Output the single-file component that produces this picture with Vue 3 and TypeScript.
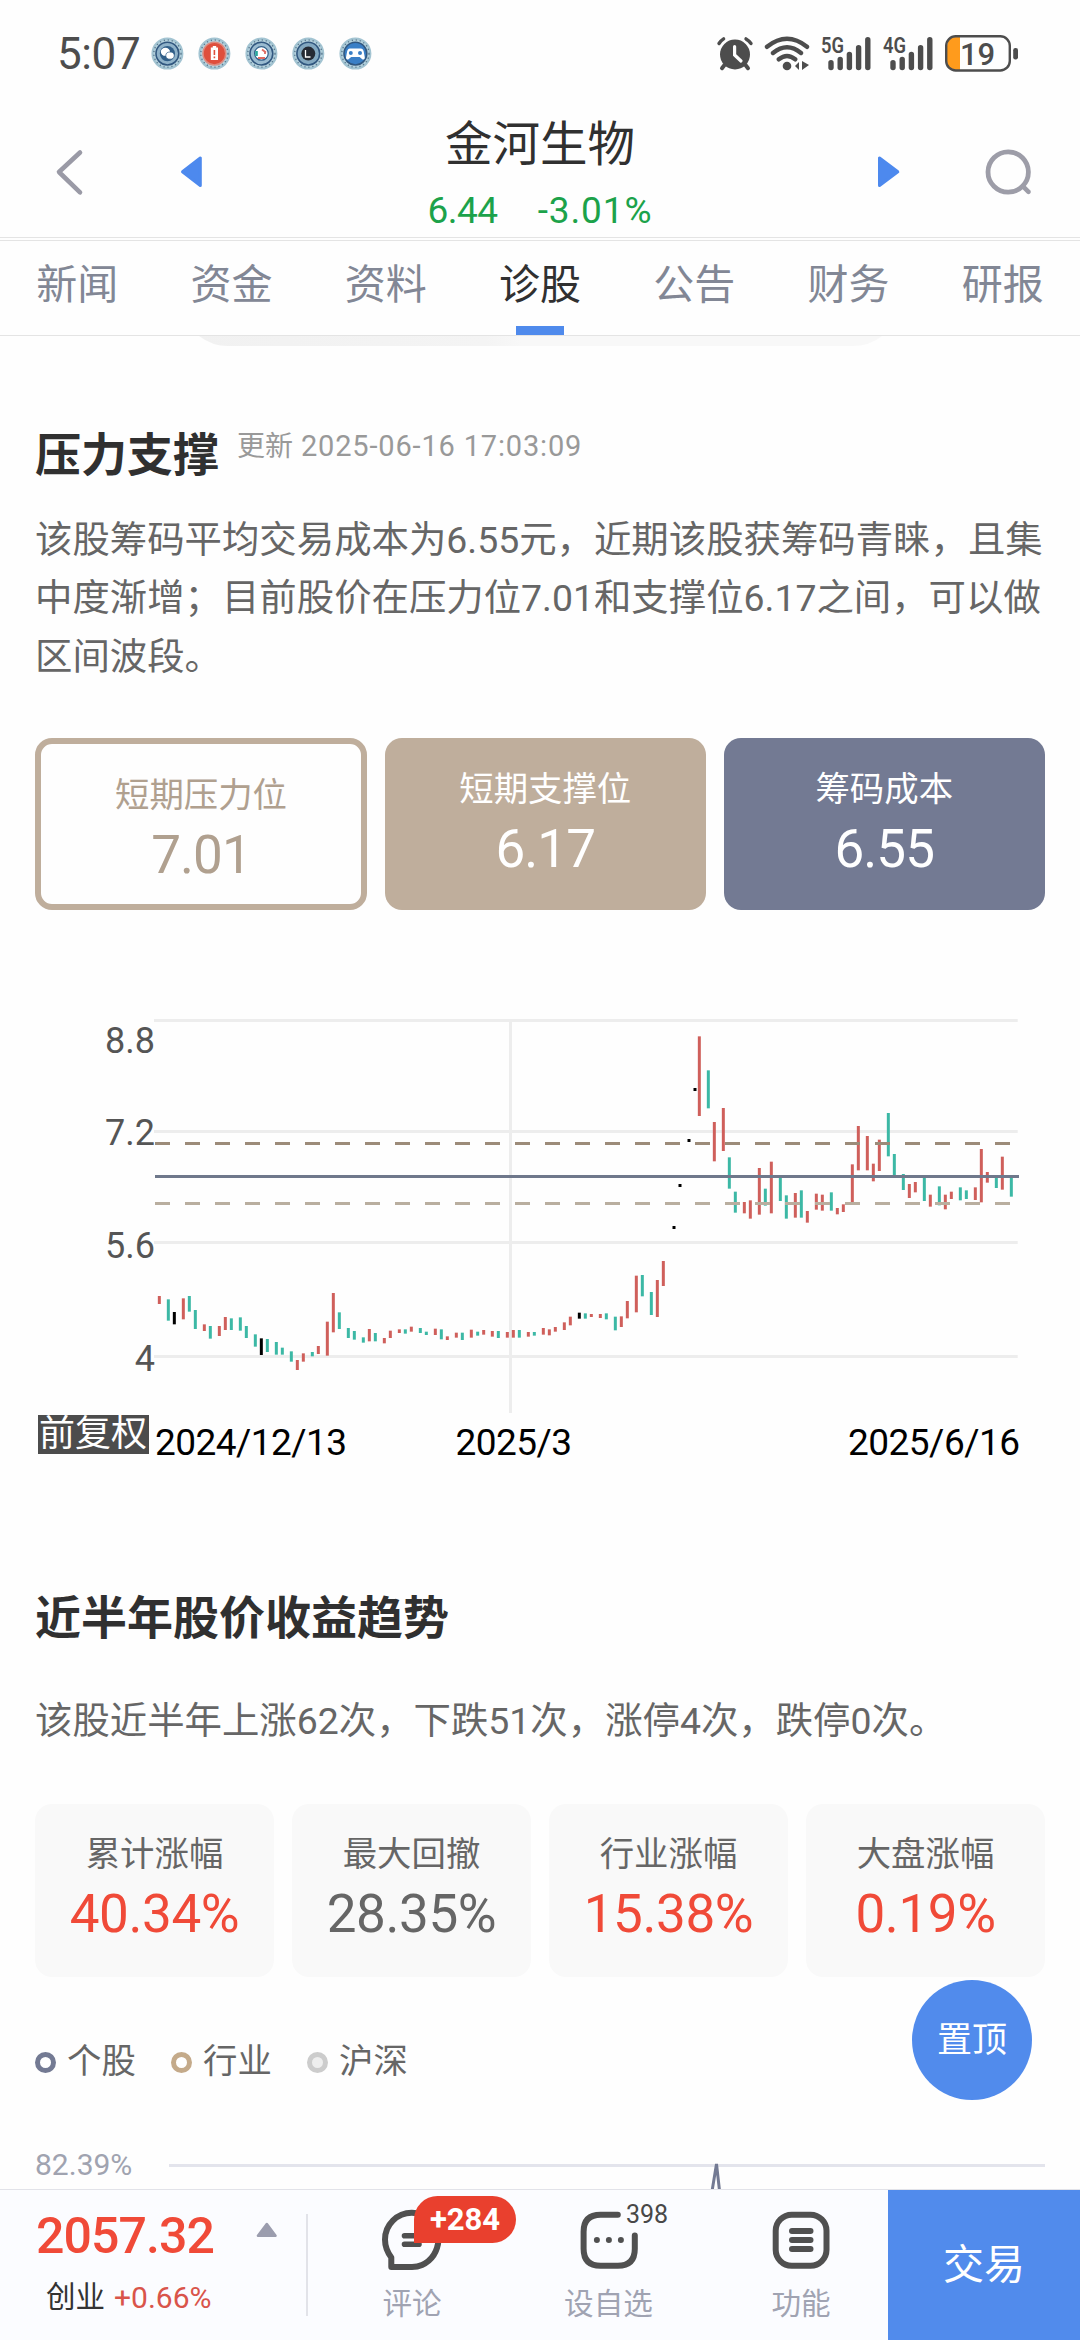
<script setup lang="ts">
type Kind = 'r' | 'g' | 'k'
type Candle = [x: number, top: number, bottom: number, kind: Kind]

const tabs = ['新闻', '资金', '资料', '诊股', '公告', '财务', '研报']
const activeTab = '诊股'

const levels = [
  { label: '短期压力位', value: '7.01', tone: 'outline' },
  { label: '短期支撑位', value: '6.17', tone: 'sand' },
  { label: '筹码成本', value: '6.55', tone: 'slate' },
]

const stats = [
  { label: '累计涨幅', value: '40.34%', up: true },
  { label: '最大回撤', value: '28.35%', up: false },
  { label: '行业涨幅', value: '15.38%', up: true },
  { label: '大盘涨幅', value: '0.19%', up: true },
]

const legend = [
  { name: '个股', ring: '#737a93', fill: '#ffffff' },
  { name: '行业', ring: '#c4aa8a', fill: '#ffffff' },
  { name: '沪深', ring: '#cccccc', fill: '#eeeeee' },
]

const gridY = [1020.5, 1131.5, 1242.5, 1356.5]
const axisY = [
  { text: '8.8', y: 1052.5 },
  { text: '7.2', y: 1144.8 },
  { text: '5.6', y: 1257.8 },
  { text: '4', y: 1370.6 },
]

const colors: Record<Kind, string> = { r: '#cf5f5b', g: '#3cb8a5', k: '#000000' }

// High-low ranges are stored in thirds of a pixel, relative to each segment's origin.
function segment(ox: number, oy: number, raw: string): Candle[] {
  return raw.split(';').map((item) => {
    const [x, t, b, k] = item.trim().split(' ')
    return [ox + Number(x) / 3, oy + Number(t) / 3, oy + Number(b) / 3, k as Kind]
  })
}

const candles: Candle[] = [
  ...segment(140, 1260, '58 108 132 r;85 118 182 g;103 156 193 k;130 115 178 r;148 108 155 g;166 150 207 g;193 193 213 r;211 198 236 g;238 198 228 r;256 171 210 r;274 175 210 g;301 172 212 g;319 198 234 g;346 223 260 g;364 235 285 k;382 237 276 g;409 246 284 g;427 263 284 g;454 274 305 g;472 300 330 r;490 280 305 r;517 276 289 g;535 258 282 r;562 185 287 r;580 99 217 r;598 157 207 g;625 204 234 g;643 213 239 g;670 232 248 g;688 207 244 r;706 219 244 g;733 234 250 r;751 212 234 r;778 208 219 r;796 208 221 g;814 200 215 r;841 204 219 g;859 215 225 g;886 206 225 r;904 208 238 g;922 229 240 r;949 218 233 r;967 218 240 g;994 209 233 r;1013 215 227 g;1031 210 224 r;1057 213 230 r;1075 213 234 g;1102 216 233 r;1120 210 233 r;1138 210 233 g;1165 216 230 r;1183 216 227 g'),
  ...segment(540, 1000, '10 984 1004 r;28 988 1006 r;46 981 995 r;73 967 990 r;91 950 976 r;118 938 956 k;136 940 956 g;154 942 951 r;181 942 954 r;199 940 958 g;226 950 991 g;244 949 981 r;262 903 955 r;289 827 937 r;307 825 889 g;334 876 945 g;352 840 951 r;370 783 858 r;402 678 687 k;420 552 561 k;447 417 426 k;465 264 273 k;478 109 348 r;505 211 325 g;523 366 484 r;550 324 453 r;568 472 566 g;586 575 638 g;613 606 640 r;631 601 656 r;658 504 644 r;676 566 617 g;694 485 640 r;721 533 603 g;739 586 656 g;766 579 653 r;784 571 653 g;802 633 668 r'),
  ...segment(800, 1000, '49 581 629 r;67 584 632 r;94 577 632 g;112 624 643 r;130 613 636 r;157 493 606 r;175 378 511 r;202 408 511 r;220 491 544 r;238 419 513 r;265 339 469 g;283 462 532 g;310 522 570 g;328 552 594 r;346 546 577 r;373 533 603 g;391 584 620 r;418 559 616 g;436 584 628 r;454 575 597 r;481 562 601 g;499 571 597 g;526 562 600 r;544 447 607 r;562 516 548 r;589 530 564 g;607 470 569 r;634 533 590 g'),
]

const signalTops = [60, 56.7, 51.7, 45, 37]
const signals = [
  { name: '5G', x: 821, bar: 831 },
  { name: '4G', x: 883, bar: 893 },
]
</script>

<template>
  <div class="screen">
    <header class="status">
      <span class="clock">5:07</span>
      <svg class="notices" width="230" height="40" viewBox="148 34 230 40">
        <g v-for="(cx, i) in [167.4, 214.4, 261.4, 308.3, 355.4]" :key="cx">
          <circle :cx="cx" cy="53.6" r="14.8" fill="#b7d3de" stroke="#a3c4d2" stroke-width="2.4" />
          <circle :cx="cx" cy="53.6" r="13.6" fill="none" stroke="#5b7a90" stroke-width="1.4" stroke-dasharray="1.2 2.8" />
          <circle :cx="cx" cy="53.6" r="11.4" :fill="['#8fb2c9', '#df4f3d', '#9abbd0', '#83a8c0', '#3a7fc6'][i]" :stroke="i === 1 ? '#dd8b80' : '#31577f'" stroke-width="1.6" />
        </g>
        <circle cx="167.4" cy="53.6" r="7.6" fill="#315f89" />
        <ellipse cx="165.4" cy="51.8" rx="4.6" ry="4" fill="#fff" />
        <ellipse cx="170" cy="55.6" rx="4.2" ry="3.6" fill="#fff" stroke="#315f89" stroke-width=".7" />
        <path d="M212.8 46h3.4v1.6h1.8v12.4h-7.2V47.6h2z" fill="#fff" />
        <path d="M214.4 50v5M214.4 56.6v1.6" stroke="#df4f3d" stroke-width="1.6" />
        <circle cx="261.4" cy="53.4" r="6.8" fill="#fff" stroke="#315f89" stroke-width="1.2" />
        <path d="M256.5 51v5" stroke="#28a79c" stroke-width="2.6" />
        <path d="M262 49.5l4 3M258 58h7M265 51v3" stroke="#df6a61" stroke-width="1.8" />
        <circle cx="308.3" cy="53.6" r="7" fill="#252a33" />
        <path d="M305.5 50v7h5" fill="none" stroke="#fff" stroke-width="1.3" />
        <path d="M350 48.600h10.800q2.200 0 2.900 3l1.100 6q0 2.600-2.200 1.800l-3-2.400h-8.400l-3 2.400q-2.200.8-2.200-1.800l1.100-6q.7-3 2.900-3z" fill="#fff" />
        <circle cx="350.8" cy="53" r="2" fill="#3a7fc6" />
        <circle cx="360" cy="53" r="2" fill="#3a7fc6" />
      </svg>
      <svg class="system" width="310" height="44" viewBox="714 32 310 44">
        <g fill="none" stroke="#4d4d4d" stroke-linecap="round">
          <circle cx="735" cy="54.5" r="15" fill="#4d4d4d" stroke="none" />
          <path d="M719 43.500q2-3 4.600-4.600M746 38.900q3 1.700 5 4.600" stroke-width="3.4" />
          <path d="M724.5 65l-2.500 3.200M745.5 65l2.500 3.200" stroke-width="4" />
          <path d="M734.6 46.500v8.500l6.400 6" stroke="#fff" stroke-width="3.2" />
          <path d="M767 46.8Q787 30.800 807 46.800M773 53Q787 41.500 801 53M778.800 59.300Q787 52.600 795.200 59.300" stroke-width="4.4" />
          <circle cx="787" cy="66" r="4.3" fill="#4d4d4d" stroke="none" />
          <path d="M795 66l4-4v8zM809 65l-7 5v-9z" fill="#4d4d4d" stroke="none" />
        </g>
        <g v-for="s in signals" :key="s.name">
          <text :x="s.x" y="53" textLength="23" lengthAdjust="spacingAndGlyphs" class="net">{{ s.name }}</text>
          <path v-for="(t, i) in signalTops" :key="t" :d="`M${s.bar + i * 9.2} ${t + 2.8}V67.5`" stroke="#4d4d4d" stroke-width="5.4" stroke-linecap="round" />
        </g>
        <path d="M960 37v33h-5q-8-1-8-9V46q0-8 8-9z" fill="#ff9b1c" />
        <rect x="946.2" y="36.3" width="63.6" height="34.2" rx="9.5" fill="none" stroke="#4d4d4d" stroke-width="2.4" />
        <rect x="1013.2" y="48" width="4.8" height="11.5" rx="2.2" fill="#4d4d4d" />
        <text x="960" y="65" class="level">19</text>
      </svg>
    </header>

    <div class="title-bar">
      <svg class="back" width="40" height="50" viewBox="50 147 40 50">
        <path d="M80 152.500L59 172l21 20.300" fill="none" stroke="#9a9aa6" stroke-width="4.6" stroke-linecap="round" stroke-linejoin="round" />
      </svg>
      <svg class="prev" width="24" height="34" viewBox="179 155 24 34">
        <path d="M182.500 171.800L200.300 158v27.600z" fill="#4d89ee" stroke="#4d89ee" stroke-width="3" stroke-linejoin="round" />
      </svg>
      <div class="stock">
        <h1>金河生物</h1>
        <p><span class="price">6.44</span><span class="change">-3.01%</span></p>
      </div>
      <svg class="next" width="24" height="34" viewBox="877 155 24 34">
        <path d="M897.800 171.800L879.500 158v27.600z" fill="#4d89ee" stroke="#4d89ee" stroke-width="3" stroke-linejoin="round" />
      </svg>
      <svg class="search" width="54" height="54" viewBox="980 145 54 54">
        <circle cx="1008.2" cy="172" r="20.2" fill="none" stroke="#9d9da8" stroke-width="4.8" />
        <path d="M1023.5 186.8l5 5" stroke="#9d9da8" stroke-width="4.6" stroke-linecap="round" />
      </svg>
    </div>

    <nav class="tabs">
      <a v-for="tab in tabs" :key="tab" :class="{ active: tab === activeTab }">{{ tab }}</a>
    </nav>

    <main class="content">
      <div class="pill"></div>

      <section class="pressure">
        <div class="heading">
          <h2>压力支撑</h2>
          <span class="updated">更新 <time>2025-06-16 17:03:09</time></span>
        </div>
        <p class="copy">该股筹码平均交易成本为6.55元，近期该股获筹码青睐，且集<br />中度渐增；目前股价在压力位7.01和支撑位6.17之间，可以做<br />区间波段。</p>
        <div class="levels">
          <div v-for="l in levels" :key="l.label" class="card" :class="l.tone">
            <span class="label">{{ l.label }}</span>
            <span class="value">{{ l.value }}</span>
          </div>
        </div>
      </section>

      <svg class="kline" width="1080" height="464" viewBox="0 1000 1080 464">
        <g stroke="#ededed" stroke-width="3">
          <path v-for="y in gridY" :key="y" :d="`M154 ${y}H1017.7`" />
          <path d="M510.5 1020V1413" />
        </g>
        <path v-for="c in candles" :key="c[0]" :d="`M${c[0]} ${c[1]}V${c[2]}`" :stroke="colors[c[3]]" stroke-width="3" />
        <path d="M155 1143.5H1018" stroke="#9c8b79" stroke-width="3" stroke-dasharray="15 15" />
        <path d="M155 1176.5H1019" stroke="#6f788b" stroke-width="3" />
        <path d="M155 1203.5H1018" stroke="#b9ae9f" stroke-width="3" stroke-dasharray="15 15" />
        <text v-for="a in axisY" :key="a.text" x="155" :y="a.y" text-anchor="end" class="axis">{{ a.text }}</text>
        <rect x="38" y="1415" width="111" height="39" fill="#4c4c4c" />
        <text x="39" y="1446" class="adjust">前复权</text>
        <text x="155" y="1454.5" class="date" textLength="192">2024/12/13</text>
        <text x="455.5" y="1454.5" class="date" textLength="116.5">2025/3</text>
        <text x="848" y="1454.5" class="date" textLength="172">2025/6/16</text>
      </svg>

      <section class="trend">
        <h2>近半年股价收益趋势</h2>
        <p class="copy">该股近半年上涨62次，下跌51次，涨停4次，跌停0次。</p>
        <div class="stats">
          <div v-for="s in stats" :key="s.label" class="card plain">
            <span class="label">{{ s.label }}</span>
            <span class="value" :class="{ up: s.up }">{{ s.value }}</span>
          </div>
        </div>
        <ul class="legend">
          <li v-for="g in legend" :key="g.name">
            <i :style="{ borderColor: g.ring, background: g.fill }"></i>{{ g.name }}
          </li>
        </ul>
        <div class="scale">
          <span>82.39%</span>
          <svg width="876" height="40" viewBox="170 2150 876 40">
            <path d="M170 2165.5H1046" stroke="#e3e4ec" stroke-width="3" />
            <path d="M712.4 2195L717.500 2164L721 2195" fill="none" stroke="#737a93" stroke-width="3" stroke-linejoin="bevel" />
          </svg>
        </div>
      </section>
    </main>

    <footer class="bottom">
      <div class="index">
        <div class="figures">
          <strong>2057.32</strong>
          <p>创业 <em>+0.66%</em></p>
        </div>
        <svg width="22" height="16" viewBox="256 2221.5 22 16">
          <path d="M266.800 2223.500L275.500 2235.300H258z" fill="#9b9dae" stroke="#9b9dae" stroke-width="2.6" stroke-linejoin="round" />
        </svg>
      </div>
      <div class="action">
        <svg width="64" height="64" viewBox="380 2208 64 64" fill="none" stroke="#505050" stroke-width="6" stroke-linecap="round" stroke-linejoin="round">
          <path d="M391.300 2267V2257.500Q385 2249 385 2239.500A26.800 26.800 0 0 1 438.600 2239.500Q437 2258 422 2265Q417.500 2267 412 2267Z" />
          <path d="M404.500 2235.700H419M404.500 2244.300H419" stroke-width="5.6" />
        </svg>
        <span>评论</span>
        <b class="badge">+284</b>
      </div>
      <div class="action">
        <svg width="64" height="64" viewBox="576 2208 64 64" fill="none" stroke="#505050" stroke-width="6" stroke-linecap="round">
          <path d="M616.800 2214.700H599.600Q582.600 2214.700 582.600 2231.700V2248.700Q582.600 2265.700 599.600 2265.700H616.800Q633.800 2265.700 633.800 2248.700V2235.500" />
          <g fill="#505050" stroke="none">
            <circle cx="595.9" cy="2240" r="3" /><circle cx="607.9" cy="2240" r="3" /><circle cx="619.9" cy="2240" r="3" />
          </g>
        </svg>
        <span>设自选</span>
        <small class="count">398</small>
      </div>
      <div class="action">
        <svg width="64" height="64" viewBox="769 2208 64 64" fill="none" stroke="#505050" stroke-width="6" stroke-linecap="round">
          <rect x="775.7" y="2214.7" width="50.8" height="51" rx="16" />
          <path d="M792 2231H810.500M792 2240H810.500M792 2249H810.500" />
        </svg>
        <span>功能</span>
      </div>
      <button class="trade">交易</button>
    </footer>

    <button class="to-top">置顶</button>
  </div>
</template>

<style>
body {
  background: #fefefe;
}
</style>

<style scoped>
* {
  box-sizing: border-box;
  margin: 0;
  padding: 0;
}

.screen {
  position: relative;
  display: flex;
  flex-direction: column;
  width: 1080px;
  height: 2340px;
  overflow: hidden;
  background: #fefefe;
  color: #666;
  font-family: Roboto, "Noto Sans CJK SC", sans-serif;
}

svg {
  display: block;
  flex: none;
}

button {
  border: 0;
  font-family: inherit;
  color: #fff;
  background: #518bec;
}

.status {
  display: flex;
  align-items: center;
  flex: none;
  height: 108px;
  padding-left: 57px;
}

.clock {
  width: 91px;
  color: #4d4d4d;
  font-size: 44px;
  line-height: 108px;
  letter-spacing: -0.4px;
}

.system {
  margin-left: 336px;
}

.net {
  font-size: 22.5px;
  font-weight: 600;
  fill: #4d4d4d;
}

.level {
  font-size: 31px;
  font-weight: 500;
  fill: #4d4d4d;
}

.title-bar {
  display: flex;
  flex: none;
  height: 130px;
  padding-top: 8px;
  border-bottom: 1px solid #e4e4e4;
}

.back {
  margin: 31px 0 0 50px;
}

.prev {
  margin: 39px 0 0 89px;
}

.stock {
  width: 674px;
  text-align: center;
}

.stock h1 {
  color: #303030;
  font-size: 47.5px;
  font-weight: 400;
  line-height: 58px;
}

.stock p {
  display: flex;
  justify-content: center;
  gap: 40px;
  margin-top: 16px;
  color: #1ca24a;
  font-size: 37px;
  line-height: 42px;
}

.price {
  letter-spacing: -0.5px;
}

.change {
  letter-spacing: 0.9px;
}

.next {
  margin: 39px 0 0 0;
}

.search {
  margin: 29px 0 0 79px;
}

.tabs {
  display: flex;
  flex: none;
  height: 96px;
  margin-top: 2px;
  border-top: 1px solid #e4e4e4;
  border-bottom: 1px solid #e4e4e4;
}

.tabs a {
  display: flex;
  flex: 1;
  flex-direction: column;
  align-items: center;
  color: #828795;
  font-size: 41px;
  line-height: 88px;
}

.tabs a.active {
  color: #303030;
}

.tabs a.active::after {
  width: 48px;
  height: 9px;
  margin-top: -3px;
  background: #4f8aec;
  content: "";
}

.content {
  flex: 1;
  min-height: 0;
  overflow: hidden;
}

.pill {
  width: 708px;
  height: 10px;
  margin-left: 186px;
  background: linear-gradient(90deg, #f1f1f1 0, #f4f4f4 300px, #f8f8f8 335px);
  clip-path: path("M13 0Q26 10 42 10H666Q684 10 696 0Z");
}

.pressure {
  padding: 77px 35px 0;
}

.heading {
  display: flex;
  align-items: flex-start;
}

h2 {
  color: #303030;
  font-size: 46px;
  font-weight: 700;
  line-height: 64px;
}

.updated {
  margin-left: 18px;
  color: #999;
  font-size: 28px;
  line-height: 46px;
}

time {
  margin-left: 1px;
  font-size: 29px;
  letter-spacing: 0.83px;
}

.copy {
  font-size: 37.4px;
  line-height: 58.3px;
  white-space: nowrap;
}

.pressure .copy {
  margin-top: 24px;
}

.levels {
  display: grid;
  grid-template-columns: 332px 321.5px 321.5px;
  gap: 17.5px;
  margin-top: 52px;
}

.card {
  display: flex;
  flex-direction: column;
  align-items: center;
  height: 172.5px;
  padding-top: 26px;
  border-radius: 17px;
  color: #fff;
}

.card .label {
  font-size: 34.4px;
  line-height: 50px;
}

.card .value {
  margin-top: 6px;
  font-size: 53px;
  line-height: 58px;
}

.outline {
  border: 6px solid #bfae9c;
  color: #b0a08f;
}

.sand {
  background: #bfae9c;
}

.slate {
  background: #737a93;
}

.levels .value {
  letter-spacing: -1px;
}

.stats .value {
  letter-spacing: -0.4px;
}

.kline {
  margin-top: 89.5px;
}

.axis {
  font-size: 36px;
  fill: #555;
}

.adjust {
  font-size: 36px;
  fill: #fff;
}

.date {
  font-size: 37px;
  fill: #000;
}

.trend {
  padding: 122px 35px 0;
}

.trend .copy {
  margin-top: 42px;
}

.stats {
  display: grid;
  grid-template-columns: repeat(4, 239px);
  gap: 18px;
  margin-top: 54px;
}

.plain {
  padding-top: 25px;
  background: #f9f9f9;
  color: #666;
}

.value.up {
  color: #f04a38;
}

.legend {
  display: flex;
  margin-top: 59.5px;
  list-style: none;
}

.legend li {
  display: flex;
  align-items: center;
  width: 136px;
  font-size: 34.4px;
  line-height: 50px;
}

.legend i {
  width: 21px;
  height: 21px;
  margin: 2px 11px 0 0;
  border: 5px solid;
  border-radius: 50%;
}

.scale {
  display: flex;
  margin-top: 64px;
}

.scale span {
  width: 135px;
  color: #a0a3b0;
  font-size: 30px;
  line-height: 29px;
}

.bottom {
  display: flex;
  flex: none;
  height: 151px;
  border-top: 1px solid #e2e3e9;
  background: #fbfcff;
}

.index {
  display: flex;
  width: 308px;
  height: 102px;
  margin-top: 24px;
  border-right: 2px solid #e2e3e9;
}

.index svg {
  margin-top: 8px;
}

.figures {
  width: 256px;
  padding-left: 36px;
}

.figures strong {
  display: block;
  color: #f04a38;
  font-size: 50px;
  font-weight: 500;
  line-height: 44px;
  letter-spacing: -0.9px;
}

.figures p {
  display: flex;
  gap: 9px;
  margin: 18px 0 0 10px;
  color: #333;
  font-size: 29.5px;
  line-height: 43px;
}

.figures em {
  color: #d9544a;
  font-size: 30px;
  font-style: normal;
}

.action {
  position: relative;
  display: flex;
  flex-direction: column;
  align-items: center;
  width: 208px;
  padding-top: 18px;
}

.action:nth-child(3) {
  width: 185px;
}

.action:nth-child(4) {
  width: 187px;
  padding-left: 13px;
}

.action span {
  margin-top: 11px;
  color: #a0a3b2;
  font-size: 29.6px;
  line-height: 42px;
}

.badge {
  position: absolute;
  top: 6px;
  left: 106px;
  width: 102px;
  height: 47px;
  border-radius: 24px 24px 24px 0;
  background: #e9402e;
  color: #fff;
  font-size: 31px;
  font-weight: 700;
  line-height: 48px;
  text-align: center;
}

.count {
  position: absolute;
  top: 9px;
  left: 110px;
  color: #484848;
  font-size: 25px;
  line-height: 32px;
}

.trade {
  flex: 1;
  font-size: 41px;
  line-height: 151px;
}

.to-top {
  position: absolute;
  top: 1980px;
  left: 912px;
  width: 120px;
  height: 120px;
  border-radius: 50%;
  font-size: 35px;
  line-height: 122px;
}
</style>
